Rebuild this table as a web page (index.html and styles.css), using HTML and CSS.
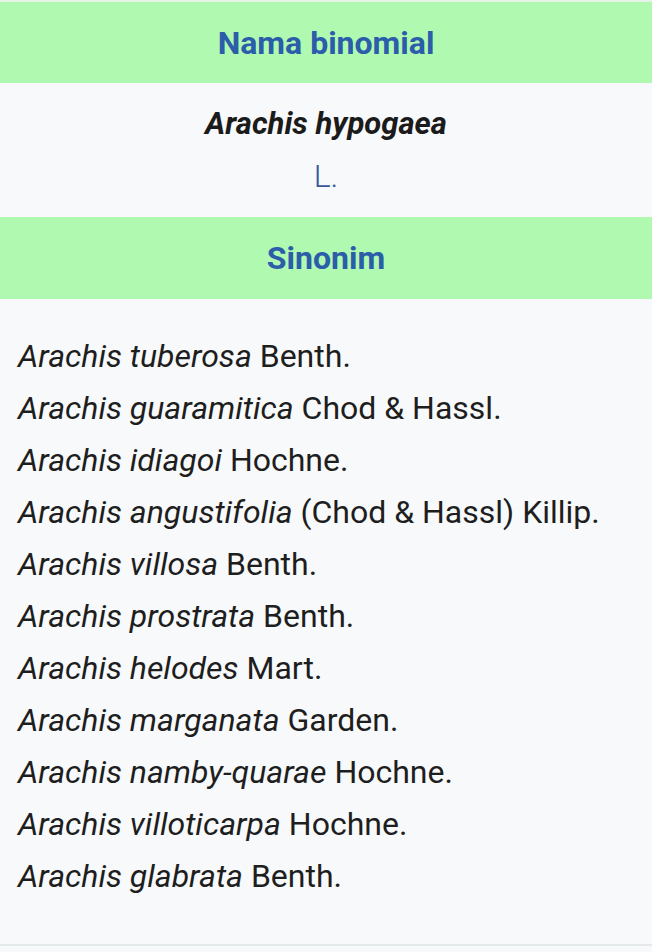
FILE: index.html
```html
<!DOCTYPE html>
<html lang="id">
<head>
<meta charset="utf-8">
<link rel="stylesheet" href="styles.css">
</head>
<body>
<div class="box">
  <div class="hdr hdr-first">Nama binomial</div>
  <div class="binomial">
    <div class="name">Arachis hypogaea</div>
    <div class="auth">L.</div>
  </div>
  <div class="hdr">Sinonim</div>
  <ul class="syn">
    <li><i>Arachis tuberosa</i> Benth.</li>
    <li><i>Arachis guaramitica</i> Chod &amp; Hassl.</li>
    <li><i>Arachis idiagoi</i> Hochne.</li>
    <li><i>Arachis angustifolia</i> (Chod &amp; Hassl) Killip.</li>
    <li><i>Arachis villosa</i> Benth.</li>
    <li><i>Arachis prostrata</i> Benth.</li>
    <li><i>Arachis helodes</i> Mart.</li>
    <li><i>Arachis marganata</i> Garden.</li>
    <li><i>Arachis namby-quarae</i> Hochne.</li>
    <li><i>Arachis villoticarpa</i> Hochne.</li>
    <li><i>Arachis glabrata</i> Benth.</li>
  </ul>
</div>
</body>
</html>
```

FILE: styles.css
```css
html, body {
  margin: 0;
  padding: 0;
  background: #f8f9fa;
}
body {
  font-family: Roboto, "Noto Sans", sans-serif;
  color: #202122;
  width: 652px;
  height: 952px;
  overflow: hidden;
}
.box {
  border-top: 2px solid #e6f2e6;
  border-bottom: 2px solid #e4e9e9;
  background: #f8f9fa;
}
.hdr {
  height: 82px;
  background: #b0f9b0;
  color: #2b5dab;
  font-weight: 700;
  font-size: 32px;
  display: flex;
  align-items: center;
  justify-content: center;
}
.hdr-first {
  height: 81px;
}
.binomial {
  height: 134px;
  box-sizing: border-box;
  padding-top: 14px;
  text-align: center;
  font-size: 31px;
  line-height: 53px;
}
.name {
  font-weight: 700;
  font-style: italic;
  color: #1b1b1b;
}
.auth {
  color: #36589a;
  font-size: 32px;
  font-weight: 300;
}
.syn {
  list-style: none;
  margin: 0;
  padding: 31px 0 42px 18px;
  font-size: 32px;
  line-height: 52px;
  color: #1e1e1e;
}
```
